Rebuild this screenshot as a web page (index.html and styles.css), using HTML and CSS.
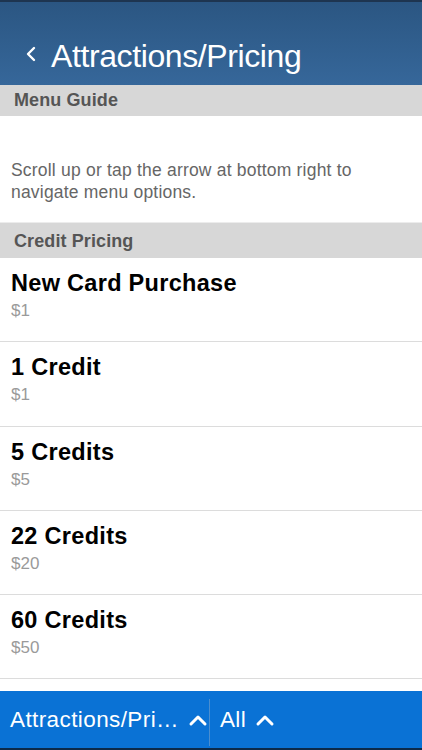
FILE: index.html
```html
<!DOCTYPE html>
<html lang="en">
<head>
    <meta charset="UTF-8">
    <meta name="viewport" content="width=device-width, initial-scale=1.0">
    <title>Attractions/Pricing</title>
    <link rel="stylesheet" href="styles.css">
</head>
<body>
    <div class="header">
        <svg class="back" width="12" height="16" viewBox="0 0 12 16">
            <path d="M9 2 L3 8 L9 14" fill="none" stroke="#fff" stroke-width="2.4" stroke-linecap="round" stroke-linejoin="round"/>
        </svg>
        <h1>Attractions/Pricing</h1>
    </div>

    <div class="section-title">Menu Guide</div>
    <div class="guide">
        <p>Scroll up or tap the arrow at bottom right to navigate menu options.</p>
    </div>

    <div class="section-title credit">Credit Pricing</div>
    <ul class="price-list">
        <li><h2>New Card Purchase</h2><span>$1</span></li>
        <li><h2>1 Credit</h2><span>$1</span></li>
        <li><h2>5 Credits</h2><span>$5</span></li>
        <li><h2>22 Credits</h2><span>$20</span></li>
        <li><h2>60 Credits</h2><span>$50</span></li>
        <li class="cut"></li>
    </ul>

    <div class="footer">
        <div class="menu-pick">
            <span class="label">Attractions/Pri…</span>
            <svg class="up" width="20" height="14" viewBox="0 0 20 14"><path d="M3 11 L10 4 L17 11" fill="none" stroke="#fff" stroke-width="3" stroke-linecap="round" stroke-linejoin="round"/></svg>
        </div>
        <div class="divider"></div>
        <div class="menu-pick">
            <span class="label">All</span>
            <svg class="up" width="20" height="14" viewBox="0 0 20 14"><path d="M3 11 L10 4 L17 11" fill="none" stroke="#fff" stroke-width="3" stroke-linecap="round" stroke-linejoin="round"/></svg>
        </div>
    </div>
</body>
</html>
```

FILE: styles.css
```css
* {
    box-sizing: border-box;
}
body {
    margin: 0;
    font-family: "Liberation Sans", Arial, sans-serif;
    background: #fff;
    width: 422px;
    height: 750px;
    overflow: hidden;
    position: relative;
}
.header {
    height: 85px;
    background: linear-gradient(#2b5682, #36679a);
    border-top: 2px solid #1e3550;
    display: flex;
    align-items: flex-end;
    padding: 0 0 10px 25px;
    color: #fff;
}
.back {
    margin-bottom: 13px;
}
.header h1 {
    margin: 0 0 0 14px;
    font-size: 32px;
    font-weight: normal;
    letter-spacing: -0.4px;
    line-height: 38px;
}
.section-title {
    background: #d7d7d7;
    color: #555;
    font-weight: bold;
    font-size: 18px;
    height: 31px;
    line-height: 31px;
    padding-left: 14px;
    letter-spacing: 0.1px;
}
.section-title.credit {
    height: 35px;
    line-height: 37px;
}
.guide {
    height: 107px;
    padding: 43px 40px 0 11px;
    border-bottom: 1px solid #ececec;
}
.guide p {
    margin: 0;
    font-size: 17.5px;
    letter-spacing: 0.2px;
    line-height: 22px;
    color: #666;
}
.price-list {
    list-style: none;
    margin: 0;
    padding: 0;
}
.price-list li {
    height: 84.3px;
    border-bottom: 1.5px solid #dcdcdc;
    padding: 12px 11px 0;
}
.price-list h2 {
    margin: 0;
    font-size: 23.5px;
    letter-spacing: 0.3px;
    line-height: 27px;
    color: #000;
}
.price-list span {
    display: block;
    margin-top: 4px;
    font-size: 17px;
    color: #9a9a9a;
}
.footer {
    position: absolute;
    left: 0;
    right: 0;
    bottom: 0;
    height: 59px;
    background: #0a72d5;
    border-bottom: 2px solid #0c2a4a;
    display: flex;
    align-items: center;
    color: #fff;
}
.menu-pick {
    display: flex;
    align-items: center;
    padding-left: 10px;
}
.menu-pick .label {
    font-size: 22.5px;
    letter-spacing: 0.4px;
}
.menu-pick .up {
    margin-left: 9px;
}
.divider {
    width: 1px;
    height: 47px;
    margin-top: 6px;
    background: #4b8ecf;
    margin-left: 1px;
}
```
